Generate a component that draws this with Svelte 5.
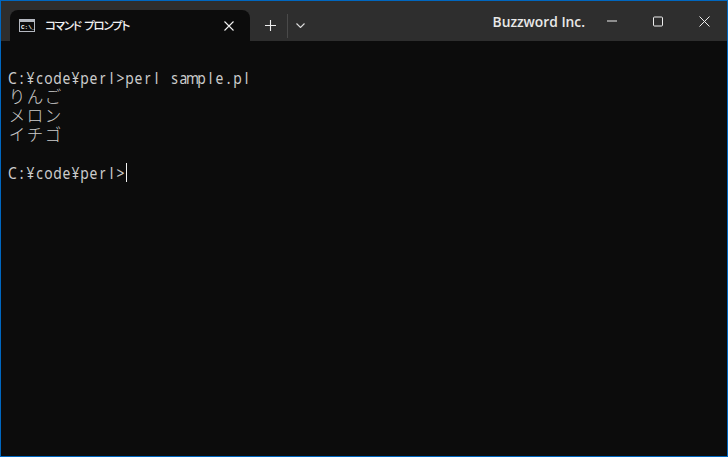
<script lang="ts">
  const lines = [
    { text: 'C:¥code¥perl>perl sample.pl' },
    { text: 'りんご', wide: true },
    { text: 'メロン', wide: true },
    { text: 'イチゴ', wide: true },
    { text: '' },
    { text: 'C:¥code¥perl>', cursor: true }
  ];
</script>

<div class="window">
  <header class="titlebar">
    <div class="tab">
      <svg class="tab-icon" width="16" height="13" viewBox="0 0 16 13">
        <rect x="0.5" y="0.5" width="15" height="12" fill="#0c0c0c" stroke="#b4b8c0" />
        <rect x="1" y="1" width="14" height="2" fill="#b4b8c0" />
        <text x="2" y="9.5" class="icon-text">C:\_</text>
      </svg>
      <span class="tab-title">コマンド プロンプト</span>
      <svg class="tab-close" width="10" height="10" viewBox="0 0 10 10">
        <path d="M0.5 0.5L9.5 9.5M9.5 0.5L0.5 9.5" stroke="#f2f2f2" stroke-width="1.1" fill="none" />
      </svg>
    </div>
    <div class="tab-actions">
      <button class="action plus" aria-label="new tab">
        <svg width="11" height="11" viewBox="0 0 11 11">
          <path d="M5.5 0V11M0 5.5H11" stroke="#eee" stroke-width="1.1" fill="none" />
        </svg>
      </button>
      <span class="divider"></span>
      <button class="action chevron" aria-label="tab menu">
        <svg width="9" height="5" viewBox="0 0 9 5">
          <path d="M0.5 0.5L4.5 4.5L8.5 0.5" stroke="#ddd" stroke-width="1.1" fill="none" />
        </svg>
      </button>
    </div>
    <span class="brand">Buzzword Inc.</span>
    <div class="window-controls">
      <button class="control" aria-label="minimize">
        <svg width="11" height="11" viewBox="0 0 11 11"><path d="M0 5H10" stroke="#eee" fill="none" /></svg>
      </button>
      <button class="control" aria-label="maximize">
        <svg width="11" height="11" viewBox="0 0 11 11"><rect x="0.5" y="1" width="9" height="9" rx="1" stroke="#eee" fill="none" /></svg>
      </button>
      <button class="control" aria-label="close">
        <svg width="11" height="11" viewBox="0 0 11 11"><path d="M0.5 0.5L10.5 10.5M10.5 0.5L0.5 10.5" stroke="#eee" fill="none" /></svg>
      </button>
    </div>
  </header>

  <main class="terminal">
    <div class="line"></div>
    {#each lines as line}
      <div class="line">
        {#each [...line.text] as ch}
          <span class={line.wide ? 'cell-wide' : 'cell'}>{ch}</span>
        {/each}
        {#if line.cursor}<span class="cursor"></span>{/if}
      </div>
    {/each}
  </main>
</div>

<style>
  :global(body) {
    margin: 0;
    background: #0c0c0c;
  }

  .window {
    width: 728px;
    height: 457px;
    box-sizing: border-box;
    border: 1px solid #0067c0;
    display: flex;
    flex-direction: column;
    overflow: hidden;
    background: #0c0c0c;
  }

  .titlebar {
    height: 40px;
    flex: none;
    display: flex;
    background: #2e2e2e;
    color: #f2f2f2;
    font-family: 'Open Sans', 'Noto Sans CJK JP', sans-serif;
  }

  .tab {
    width: 240px;
    height: 31px;
    margin: 9px 0 0 9px;
    box-sizing: border-box;
    padding-left: 9px;
    display: flex;
    align-items: center;
    background: #0c0c0c;
    border-radius: 8px 8px 0 0;
  }

  .tab-icon {
    flex: none;
  }

  .icon-text {
    font-family: 'Liberation Mono', monospace;
    font-size: 6px;
    font-weight: bold;
    fill: #fff;
  }

  .tab-title {
    margin-left: 10px;
    padding-bottom: 1px;
    font-size: 11.5px;
    font-weight: 500;
    font-family: 'Noto Sans CJK JP', sans-serif;
    font-feature-settings: 'palt' 1;
    letter-spacing: -1.2px;
    word-spacing: 2px;
    white-space: nowrap;
  }

  .tab-close {
    margin-left: auto;
    margin-right: 16px;
  }

  .tab-actions {
    display: flex;
    align-items: center;
    height: 31px;
    margin-top: 9px;
  }

  button {
    border: none;
    background: none;
    padding: 0;
    display: flex;
    align-items: center;
    justify-content: center;
  }

  .action {
    height: 31px;
    width: 37px;
  }

  .plus {
    padding-left: 3px;
  }

  .chevron {
    width: 24px;
  }

  .divider {
    width: 1px;
    height: 24px;
    background: #4a4a4a;
  }

  .brand {
    margin-left: auto;
    margin-right: 4px;
    align-self: center;
    font-size: 13.8px;
    font-weight: 600;
    color: #e8e8e8;
  }

  .window-controls {
    display: flex;
  }

  .control {
    width: 46px;
    height: 40px;
  }

  .terminal {
    flex: 1;
    padding: 8px 0 0 7px;
    color: #cccccc;
    line-height: 19px;
  }

  .line {
    height: 19px;
    display: flex;
    align-items: center;
  }

  .cell {
    flex: none;
    width: 9px;
    display: flex;
    justify-content: center;
    font-family: 'Noto Sans', sans-serif;
    font-size: 16.5px;
    font-weight: 400;
    transform: scaleX(0.84);
  }

  .cell-wide {
    flex: none;
    width: 18px;
    height: 17px;
    line-height: 17px;
    display: flex;
    justify-content: center;
    font-family: 'Noto Sans CJK JP', sans-serif;
    font-size: 16.5px;
    font-weight: 300;
  }

  .cursor {
    width: 1px;
    height: 19px;
    margin-left: 1px;
    background: #f2f2f2;
  }
</style>
